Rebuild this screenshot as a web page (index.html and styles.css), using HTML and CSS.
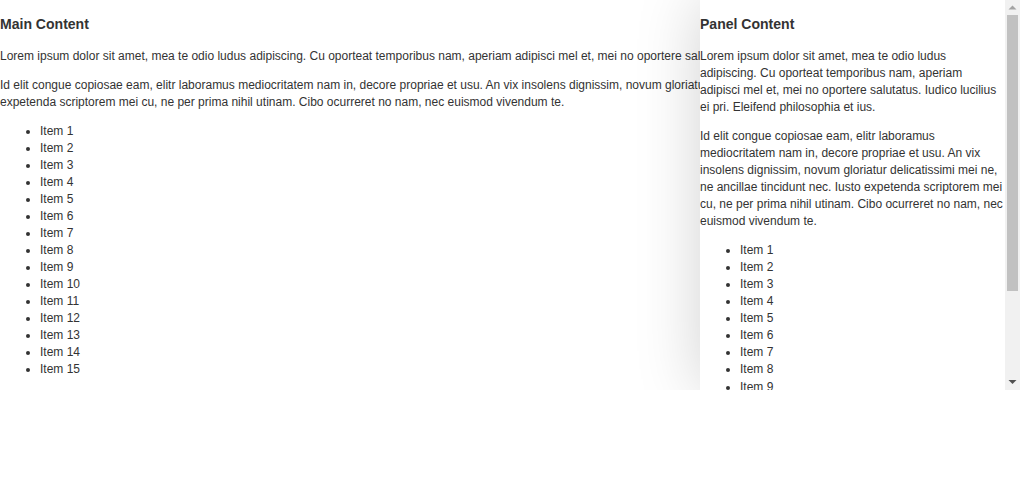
FILE: index.html
```html
<!DOCTYPE html>
<html>
<head>
<meta charset="utf-8">
<link rel="stylesheet" href="styles.css">
</head>
<body>
<div class="app">
  <main class="main">
    <h3>Main Content</h3>
    <p>Lorem ipsum dolor sit amet, mea te odio ludus adipiscing. Cu oporteat temporibus nam, aperiam adipisci mel et, mei no oportere salutatus. Iudico lucilius ei pri. Eleifend philosophia et ius.</p>
    <p>Id elit congue copiosae eam, elitr laboramus mediocritatem nam in, decore propriae et usu. An vix insolens dignissim, novum gloriatur delicatissimi mei ne, ne ancillae tincidunt nec. Iusto expetenda scriptorem mei cu, ne per prima nihil utinam. Cibo ocurreret no nam, nec euismod vivendum te.</p>
    <ul>
      <li>Item 1</li><li>Item 2</li><li>Item 3</li><li>Item 4</li><li>Item 5</li>
      <li>Item 6</li><li>Item 7</li><li>Item 8</li><li>Item 9</li><li>Item 10</li>
      <li>Item 11</li><li>Item 12</li><li>Item 13</li><li>Item 14</li><li>Item 15</li>
    </ul>
  </main>
  <aside class="panel">
    <div class="panel-body">
      <h3>Panel Content</h3>
      <p>Lorem ipsum dolor sit amet, mea te odio ludus adipiscing. Cu oporteat temporibus nam, aperiam adipisci mel et, mei no oportere salutatus. Iudico lucilius ei pri. Eleifend philosophia et ius.</p>
      <p>Id elit congue copiosae eam, elitr laboramus mediocritatem nam in, decore propriae et usu. An vix insolens dignissim, novum gloriatur delicatissimi mei ne, ne ancillae tincidunt nec. Iusto expetenda scriptorem mei cu, ne per prima nihil utinam. Cibo ocurreret no nam, nec euismod vivendum te.</p>
      <ul>
        <li>Item 1</li><li>Item 2</li><li>Item 3</li><li>Item 4</li><li>Item 5</li>
        <li>Item 6</li><li>Item 7</li><li>Item 8</li><li>Item 9</li><li>Item 10</li>
        <li>Item 11</li><li>Item 12</li><li>Item 13</li><li>Item 14</li><li>Item 15</li>
      </ul>
    </div>
    <div class="scrollbar">
      <div class="sb-btn">
        <svg width="15" height="15" viewBox="0 0 15 15"><polygon points="3.5,9.5 7.5,5.5 11.5,9.5" fill="#a3a3a3"/></svg>
      </div>
      <div class="sb-track"><div class="sb-thumb"></div></div>
      <div class="sb-btn">
        <svg width="15" height="15" viewBox="0 0 15 15"><polygon points="3.5,5 11.5,5 7.5,9" fill="#505050"/></svg>
      </div>
    </div>
  </aside>
</div>
</body>
</html>
```

FILE: styles.css
```css
html, body {
  margin: 0;
  padding: 0;
  background: #fff;
}
body {
  font-family: "Liberation Sans", Arial, sans-serif;
  font-size: 12px;
  line-height: 1.42;
  color: #333;
}
.app {
  position: relative;
  height: 390px;
  overflow: hidden;
}
.main {
  height: 100%;
  overflow: hidden;
  display: flow-root;
}
h3 {
  font-size: 1.17em;
  margin: 15px 0 13px;
}
p {
  margin: 12px 0;
}
ul {
  margin: 12px 0;
  padding-left: 40px;
}
.panel {
  position: absolute;
  top: 0;
  right: 0;
  width: 320px;
  height: 100%;
  display: flex;
  background: #fff;
  box-shadow: 0 0 60px rgba(0, 0, 0, 0.18);
}
.panel-body {
  flex: 1;
  min-width: 0;
  overflow: hidden;
  display: flow-root;
}
.scrollbar {
  width: 15px;
  flex: none;
  display: flex;
  flex-direction: column;
  background: #f1f1f1;
}
.sb-btn {
  height: 15px;
  flex: none;
}
.sb-btn svg {
  display: block;
}
.sb-track {
  flex: 1;
  padding: 0 2px;
}
.sb-thumb {
  height: 276px;
  background: #c1c1c1;
}
```
